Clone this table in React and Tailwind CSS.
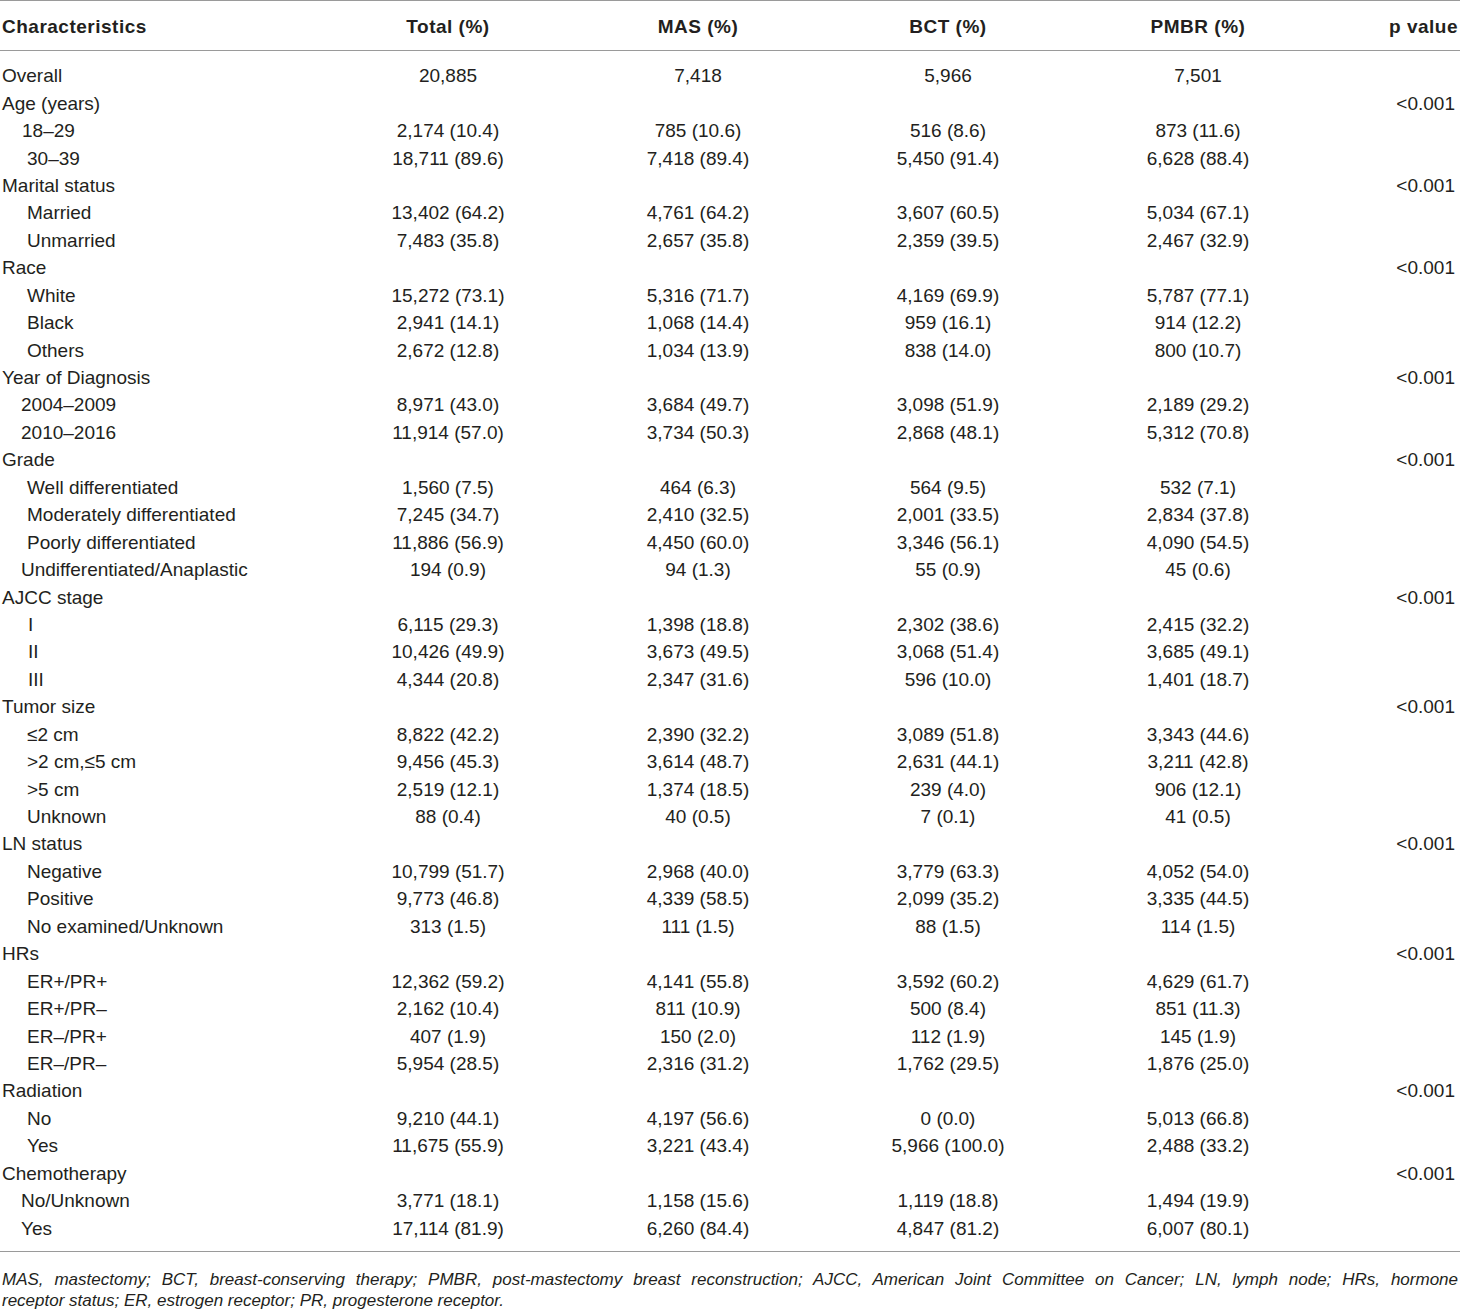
import React from "react";

// indent: 0 = group heading, otherwise left padding in px
const rows = [
  ["Overall", 0, "20,885", "7,418", "5,966", "7,501", ""],
  ["Age (years)", 0, "", "", "", "", "<0.001"],
  ["18–29", 22, "2,174 (10.4)", "785 (10.6)", "516 (8.6)", "873 (11.6)", ""],
  ["30–39", 27, "18,711 (89.6)", "7,418 (89.4)", "5,450 (91.4)", "6,628 (88.4)", ""],
  ["Marital status", 0, "", "", "", "", "<0.001"],
  ["Married", 27, "13,402 (64.2)", "4,761 (64.2)", "3,607 (60.5)", "5,034 (67.1)", ""],
  ["Unmarried", 27, "7,483 (35.8)", "2,657 (35.8)", "2,359 (39.5)", "2,467 (32.9)", ""],
  ["Race", 0, "", "", "", "", "<0.001"],
  ["White", 27, "15,272 (73.1)", "5,316 (71.7)", "4,169 (69.9)", "5,787 (77.1)", ""],
  ["Black", 27, "2,941 (14.1)", "1,068 (14.4)", "959 (16.1)", "914 (12.2)", ""],
  ["Others", 27, "2,672 (12.8)", "1,034 (13.9)", "838 (14.0)", "800 (10.7)", ""],
  ["Year of Diagnosis", 0, "", "", "", "", "<0.001"],
  ["2004–2009", 21, "8,971 (43.0)", "3,684 (49.7)", "3,098 (51.9)", "2,189 (29.2)", ""],
  ["2010–2016", 21, "11,914 (57.0)", "3,734 (50.3)", "2,868 (48.1)", "5,312 (70.8)", ""],
  ["Grade", 0, "", "", "", "", "<0.001"],
  ["Well differentiated", 27, "1,560 (7.5)", "464 (6.3)", "564 (9.5)", "532 (7.1)", ""],
  ["Moderately differentiated", 27, "7,245 (34.7)", "2,410 (32.5)", "2,001 (33.5)", "2,834 (37.8)", ""],
  ["Poorly differentiated", 27, "11,886 (56.9)", "4,450 (60.0)", "3,346 (56.1)", "4,090 (54.5)", ""],
  ["Undifferentiated/Anaplastic", 21, "194 (0.9)", "94 (1.3)", "55 (0.9)", "45 (0.6)", ""],
  ["AJCC stage", 0, "", "", "", "", "<0.001"],
  ["I", 28, "6,115 (29.3)", "1,398 (18.8)", "2,302 (38.6)", "2,415 (32.2)", ""],
  ["II", 28, "10,426 (49.9)", "3,673 (49.5)", "3,068 (51.4)", "3,685 (49.1)", ""],
  ["III", 28, "4,344 (20.8)", "2,347 (31.6)", "596 (10.0)", "1,401 (18.7)", ""],
  ["Tumor size", 0, "", "", "", "", "<0.001"],
  ["≤2 cm", 27, "8,822 (42.2)", "2,390 (32.2)", "3,089 (51.8)", "3,343 (44.6)", ""],
  [">2 cm,≤5 cm", 27, "9,456 (45.3)", "3,614 (48.7)", "2,631 (44.1)", "3,211 (42.8)", ""],
  [">5 cm", 27, "2,519 (12.1)", "1,374 (18.5)", "239 (4.0)", "906 (12.1)", ""],
  ["Unknown", 27, "88 (0.4)", "40 (0.5)", "7 (0.1)", "41 (0.5)", ""],
  ["LN status", 0, "", "", "", "", "<0.001"],
  ["Negative", 27, "10,799 (51.7)", "2,968 (40.0)", "3,779 (63.3)", "4,052 (54.0)", ""],
  ["Positive", 27, "9,773 (46.8)", "4,339 (58.5)", "2,099 (35.2)", "3,335 (44.5)", ""],
  ["No examined/Unknown", 27, "313 (1.5)", "111 (1.5)", "88 (1.5)", "114 (1.5)", ""],
  ["HRs", 0, "", "", "", "", "<0.001"],
  ["ER+/PR+", 27, "12,362 (59.2)", "4,141 (55.8)", "3,592 (60.2)", "4,629 (61.7)", ""],
  ["ER+/PR–", 27, "2,162 (10.4)", "811 (10.9)", "500 (8.4)", "851 (11.3)", ""],
  ["ER–/PR+", 27, "407 (1.9)", "150 (2.0)", "112 (1.9)", "145 (1.9)", ""],
  ["ER–/PR–", 27, "5,954 (28.5)", "2,316 (31.2)", "1,762 (29.5)", "1,876 (25.0)", ""],
  ["Radiation", 0, "", "", "", "", "<0.001"],
  ["No", 27, "9,210 (44.1)", "4,197 (56.6)", "0 (0.0)", "5,013 (66.8)", ""],
  ["Yes", 27, "11,675 (55.9)", "3,221 (43.4)", "5,966 (100.0)", "2,488 (33.2)", ""],
  ["Chemotherapy", 0, "", "", "", "", "<0.001"],
  ["No/Unknown", 21, "3,771 (18.1)", "1,158 (15.6)", "1,119 (18.8)", "1,494 (19.9)", ""],
  ["Yes", 21, "17,114 (81.9)", "6,260 (84.4)", "4,847 (81.2)", "6,007 (80.1)", ""],
];

const cols = "grid grid-cols-[323px_250px_250px_250px_250px_1fr]";

export default function App() {
  return (
    <div
      className="w-[1460px] bg-white text-[#231f20]"
      style={{ fontFamily: '"Liberation Sans", Arial, sans-serif' }}
    >
      {/* header */}
      <div className={`${cols} h-[51px] items-center border-t border-b border-[#9a9a9a] pt-[3px] text-[19px] font-bold tracking-[0.5px]`}>
        <div className="pl-[2px]">Characteristics</div>
        <div className="text-center">Total (%)</div>
        <div className="text-center">MAS (%)</div>
        <div className="text-center">BCT (%)</div>
        <div className="text-center">PMBR (%)</div>
        <div className="pr-[2px] text-right">p value</div>
      </div>

      {/* body */}
      <div className="border-b border-[#9a9a9a] pt-[11px] pb-[9px] text-[19px]">
        {rows.map((r, i) => (
          <div key={i} className={`${cols} h-[27.45px] items-center leading-none`}>
            <div style={{ paddingLeft: r[1] || 2 }}>{r[0]}</div>
            <div className="text-center">{r[2]}</div>
            <div className="text-center">{r[3]}</div>
            <div className="text-center">{r[4]}</div>
            <div className="text-center">{r[5]}</div>
            <div className="pr-[5px] text-right">{r[6]}</div>
          </div>
        ))}
      </div>

      {/* footnote, first line justified to full width */}
      <div className="pt-[17px] pl-[2px] pr-[2px] text-[17px] italic leading-[21px]">
        <div className="whitespace-nowrap text-justify [text-align-last:justify]">
          MAS, mastectomy; BCT, breast-conserving therapy; PMBR, post-mastectomy breast reconstruction; AJCC, American Joint Committee on Cancer; LN, lymph node; HRs, hormone
        </div>
        <div className="whitespace-nowrap">
          receptor status; ER, estrogen receptor; PR, progesterone receptor.
        </div>
      </div>
    </div>
  );
}
